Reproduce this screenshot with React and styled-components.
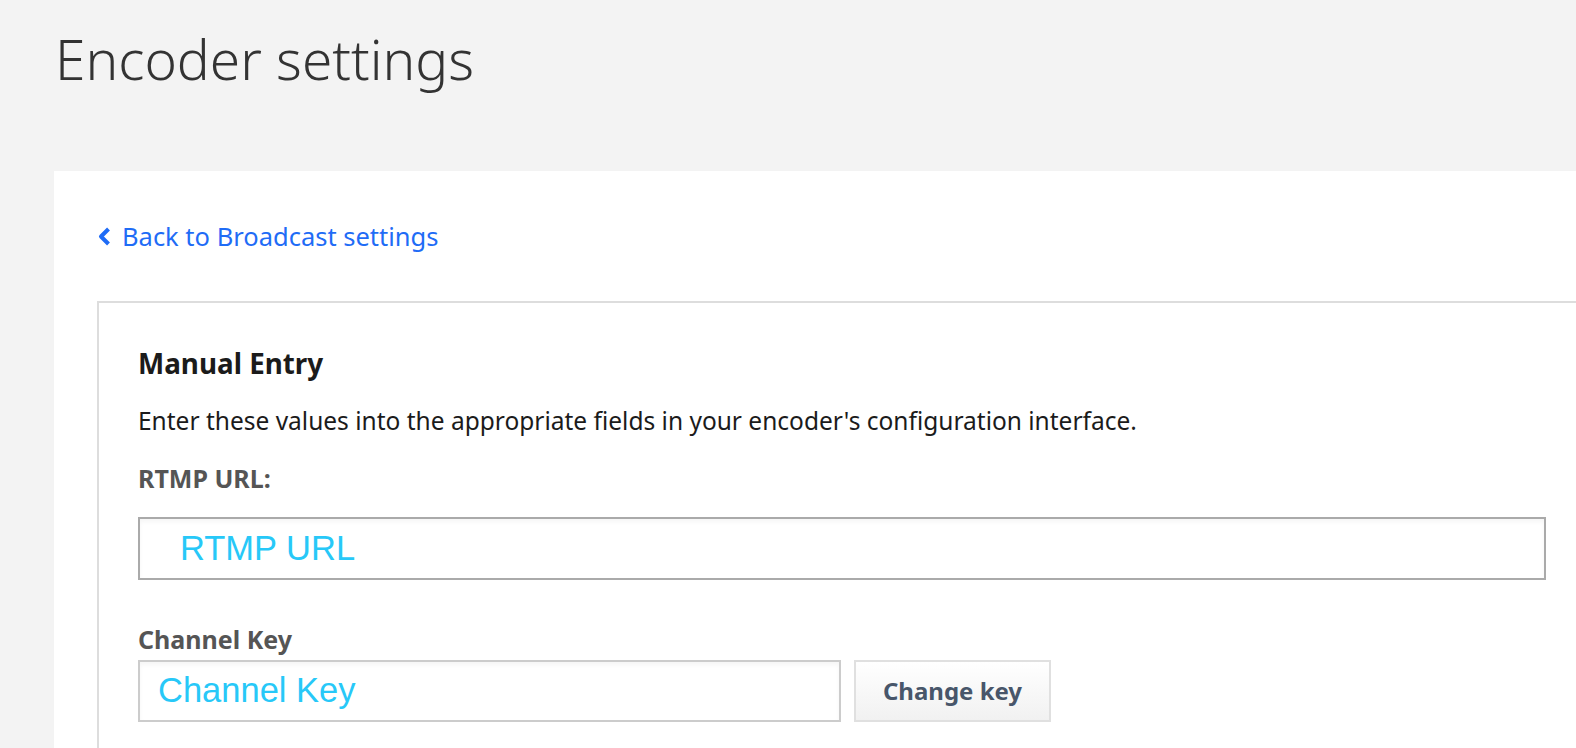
import React from "react";
import styled, { createGlobalStyle } from "styled-components";

const GlobalStyle = createGlobalStyle`
  html, body {
    margin: 0;
    padding: 0;
    background: #f3f3f3;
    overflow: hidden;
  }
  body {
    font-family: "Noto Sans", "Open Sans", sans-serif;
  }
`;

const Page = styled.div`
  height: 748px;
  width: 1576px;
  overflow: hidden;
`;

const Title = styled.h1`
  margin: 0;
  padding: 21px 0 0 55px;
  height: 171px;
  box-sizing: border-box;
  font-size: 55px;
  font-weight: 300;
  line-height: 76px;
  color: #333333;
`;

const Panel = styled.div`
  margin-left: 54px;
  margin-right: -40px;
  background: #ffffff;
  padding: 49px 0 0 43px;
  min-height: 600px;
`;

const BackLink = styled.a`
  display: inline-flex;
  align-items: center;
  gap: 11px;
  color: #1f6cf6;
  font-size: 25.5px;
  line-height: 32px;
  text-decoration: none;
  cursor: pointer;
`;

const Box = styled.div`
  margin-top: 49px;
  border: 2px solid #dddddd;
  border-right: none;
  padding: 43px 0 80px 39px;
`;

const Heading = styled.h2`
  margin: 0;
  font-size: 27.8px;
  font-weight: 700;
  line-height: 34px;
  color: #1b1b1b;
`;

const Intro = styled.p`
  margin: 25.5px 0 0;
  font-size: 24.5px;
  line-height: 30px;
  color: #1b1b1b;
`;

const Label = styled.div`
  margin-top: ${(p) => p.$top}px;
  font-size: 25px;
  font-weight: 700;
  line-height: 30px;
  color: #555555;
`;

const Field = styled.div`
  box-sizing: border-box;
  flex: none;
  width: ${(p) => p.$width}px;
  height: ${(p) => p.$height}px;
  margin-top: ${(p) => p.$top || 0}px;
  border: 2px solid ${(p) => p.$border};
  box-shadow: inset 0 3px 4px rgba(0, 0, 0, 0.04);
  background: #ffffff;
  display: flex;
  align-items: center;
  padding-left: ${(p) => p.$pad}px;
  font-family: "Liberation Sans", Arial, sans-serif;
  font-size: 34.5px;
  color: #27c8f8;
`;

const KeyRow = styled.div`
  display: flex;
  gap: 13px;
  margin-top: 6px;
`;

const Button = styled.button`
  box-sizing: border-box;
  width: 197px;
  height: 62px;
  border: 2px solid #e0e0e0;
  background: linear-gradient(#ffffff, #f1f1f1);
  font-family: "Noto Sans", "Open Sans", sans-serif;
  font-size: 24px;
  font-weight: 700;
  color: #48566a;
  cursor: pointer;
`;

const Chevron = () => (
  <svg width="14" height="19" viewBox="0 0 14 19" aria-hidden="true">
    <path
      d="M11.5 2 L4 9.5 L11.5 17"
      fill="none"
      stroke="#1f6cf6"
      strokeWidth="4"
      strokeLinejoin="round"
    />
  </svg>
);

export default function App() {
  return (
    <Page>
      <GlobalStyle />
      <Title>Encoder settings</Title>
      <Panel>
        <BackLink>
          <Chevron />
          Back to Broadcast settings
        </BackLink>
        <Box>
          <Heading>Manual Entry</Heading>
          <Intro>
            Enter these values into the appropriate fields in your encoder's
            configuration interface.
          </Intro>
          <Label $top={27}>RTMP URL:</Label>
          <Field $width={1408} $height={63} $border="#aaaaaa" $pad={40} $top={24}>
            RTMP URL
          </Field>
          <Label $top={44}>Channel Key</Label>
          <KeyRow>
            <Field $width={703} $height={62} $border="#cccccc" $pad={18}>
              Channel Key
            </Field>
            <Button>Change key</Button>
          </KeyRow>
        </Box>
      </Panel>
    </Page>
  );
}
